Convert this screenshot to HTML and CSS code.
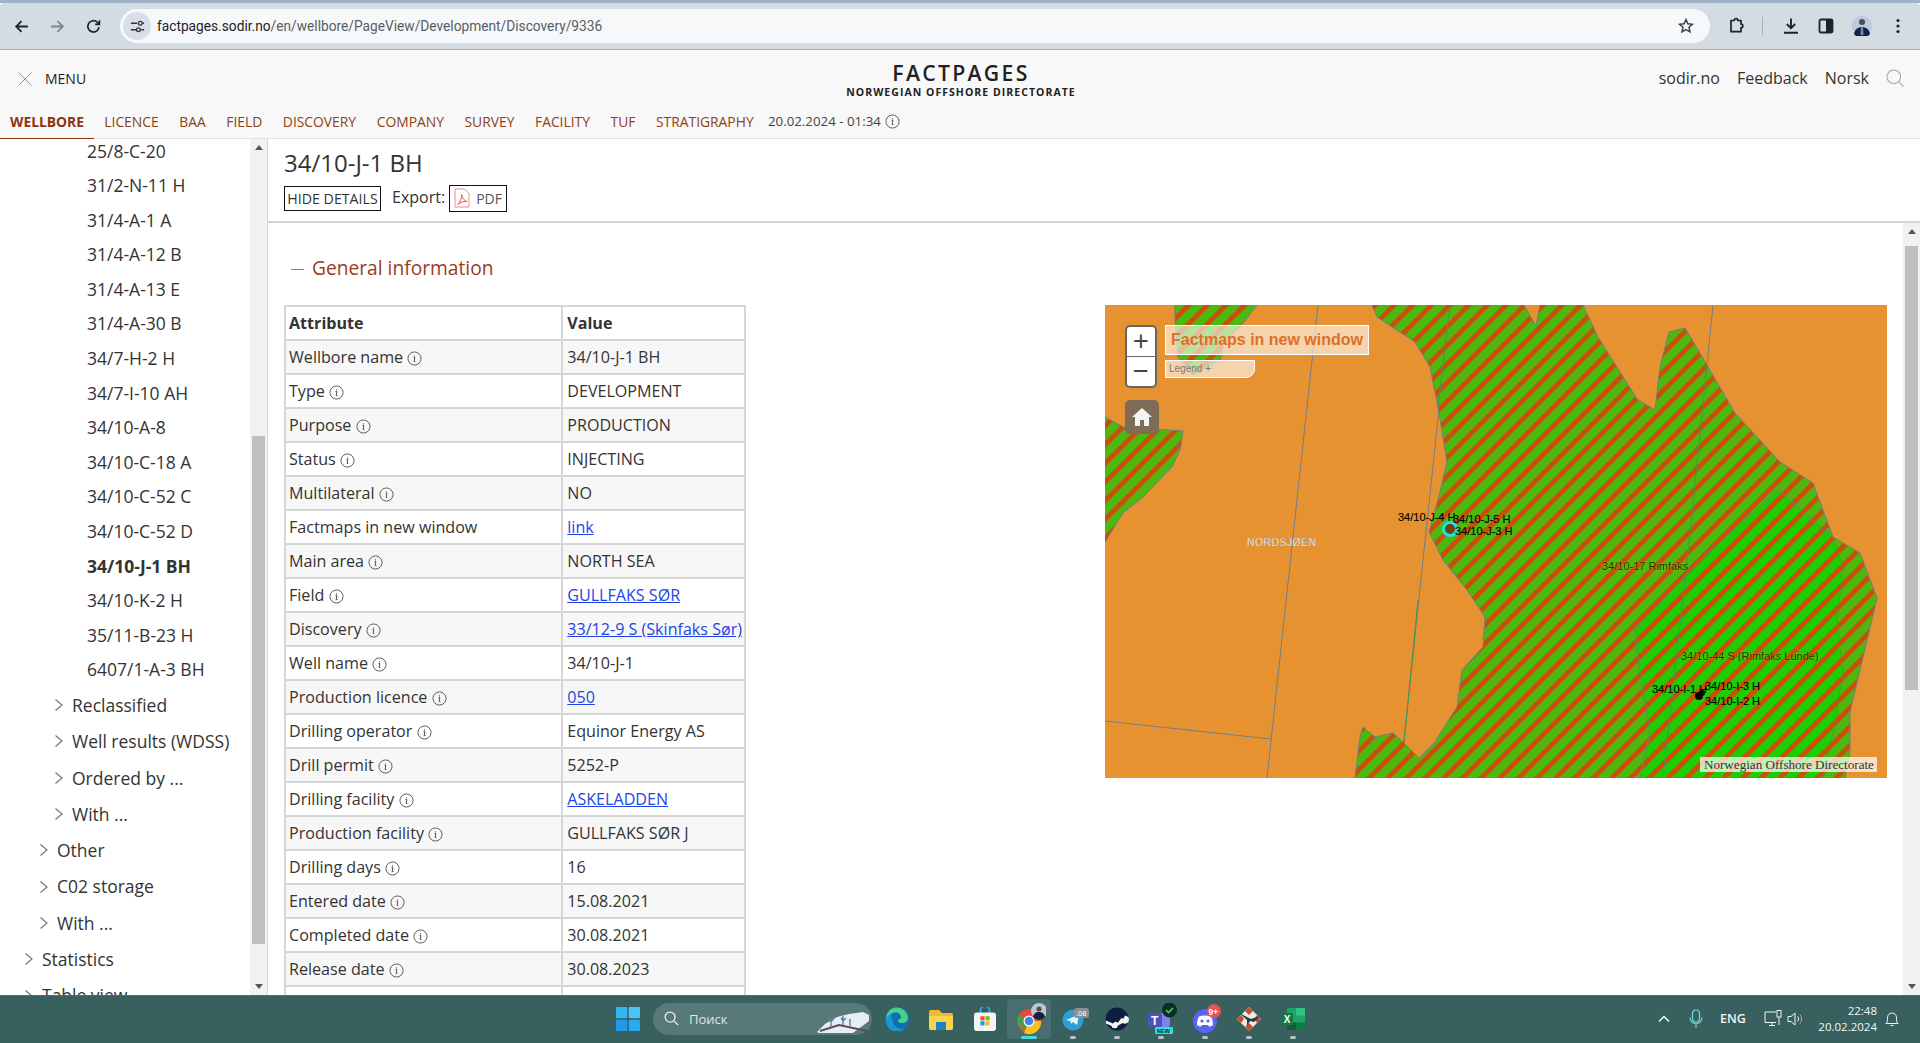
FILE: index.html
```html
<!DOCTYPE html>
<html lang="en">
<head>
<meta charset="utf-8">
<title>FactPages</title>
<link rel="stylesheet" href="styles.css">
</head>
<body>
<svg class="defs" width="0" height="0" aria-hidden="true">
  <defs>
    <symbol id="info" viewBox="0 0 16 16">
      <circle cx="8" cy="8" r="7" fill="none" stroke="#555" stroke-width="1"/>
      <path d="M7 7h1.400L7.600 11.200h1.300M8 4.600v1.200" fill="none" stroke="#444" stroke-width="1"/>
    </symbol>
    <symbol id="chev" viewBox="0 0 10 14">
      <path d="M1.500 1.500 8 7l-6.500 5.500" fill="none" stroke="#777" stroke-width="1.200"/>
    </symbol>
    <pattern id="stripes" width="13.200" height="13.200" patternUnits="userSpaceOnUse" patternTransform="rotate(45) translate(4 0)">
      <rect width="5" height="13.200" fill="#c8500a"/>
    </pattern>
  </defs>
</svg>

<div class="tabstrip"></div>
<div class="toolbar">
  <svg class="tb-icon" viewBox="0 0 16 16"><path d="M14 8H3M8 3 3 8l5 5" fill="none" stroke="#1f2328" stroke-width="1.700"/></svg>
  <svg class="tb-icon" viewBox="0 0 16 16"><path d="M2 8h11M8 3l5 5-5 5" fill="none" stroke="#7e868e" stroke-width="1.700"/></svg>
  <svg class="tb-icon" viewBox="0 0 16 16"><path d="M13.200 8.600A5.300 5.300 0 1 1 11.600 4L13.500 5.800M13.600 2v4h-4" fill="none" stroke="#1f2328" stroke-width="1.600"/></svg>
  <div class="omnibox">
    <span class="site-btn">
      <svg viewBox="0 0 16 16" width="15" height="15"><path d="M1 4.500h6.500M12 11.500h3M1 11.500h5.500" stroke="#333" stroke-width="1.500" fill="none"/><circle cx="11" cy="4.500" r="2" fill="none" stroke="#333" stroke-width="1.400"/><circle cx="9" cy="11.500" r="2" fill="none" stroke="#333" stroke-width="1.400"/><path d="M13 4.500h2" stroke="#333" stroke-width="1.500"/></svg>
    </span>
    <span class="url"><span class="url-host">factpages.sodir.no</span>/en/wellbore/PageView/Development/Discovery/9336</span>
    <svg class="star" viewBox="0 0 16 16"><path d="m8 1.600 1.900 4.200 4.500.5-3.400 3 1 4.500L8 11.500l-4 2.300 1-4.500-3.400-3 4.500-.5z" fill="none" stroke="#3c4043" stroke-width="1.500"/></svg>
  </div>
  <div class="tb-right">
    <svg class="tb-icon-r" viewBox="0 0 18 18"><path d="M4 3.500h3.200a1.800 1.800 0 0 1 3.600 0H14v3.600a1.800 1.800 0 0 1 0 3.600v4H4z" fill="none" stroke="#1f2328" stroke-width="1.700" stroke-linejoin="round"/></svg>
    <span class="tb-sep"></span>
    <svg class="tb-icon-r dl" viewBox="0 0 18 18"><path d="M9 1.500v9.500M4.800 7 9 11.200 13.200 7M2 15.700h14" fill="none" stroke="#1f2328" stroke-width="1.900"/></svg>
    <svg class="tb-icon-r panel" viewBox="0 0 18 18"><rect x="2.500" y="2.500" width="13" height="13" rx="1.500" fill="none" stroke="#1f2328" stroke-width="1.800"/><rect x="9" y="2.500" width="6.500" height="13" fill="#1f2328"/></svg>
    <svg class="tb-icon-r avatar" viewBox="0 0 20 20"><circle cx="10" cy="10" r="10" fill="#b9cbe0"/><circle cx="10" cy="6" r="3" fill="#5a4a42"/><path d="M2 18c1-5 4-7 8-7s7 2 8 7a10 10 0 0 1-16 0z" fill="#16233f"/><path d="M9 11h2l.5 8h-3z" fill="#6f86c8"/></svg>
    <svg class="tb-icon-r dots" viewBox="0 0 18 18"><circle cx="9" cy="3.500" r="1.600" fill="#1f2328"/><circle cx="9" cy="9" r="1.600" fill="#1f2328"/><circle cx="9" cy="14.500" r="1.600" fill="#1f2328"/></svg>
  </div>
</div>

<header class="site-header">
  <div class="header-top">
    <div class="menu">
      <svg viewBox="0 0 14 14" width="14" height="14"><path d="M.5.5l13 13M13.500.5l-13 13" stroke="#999" stroke-width="1"/></svg>
      <span>MENU</span>
    </div>
    <div class="brand">
      <div class="brand-title">FACTPAGES</div>
      <div class="brand-sub">NORWEGIAN OFFSHORE DIRECTORATE</div>
    </div>
    <div class="util">
      <span>sodir.no</span><span>Feedback</span><span>Norsk</span>
      <svg viewBox="0 0 18 18" width="18" height="18"><circle cx="7.800" cy="7.800" r="6.800" fill="none" stroke="#aaa" stroke-width="1.100"/><path d="m12.800 12.800 4.500 4.700" stroke="#aaa" stroke-width="1.100"/></svg>
    </div>
  </div>
  <nav class="nav">
    <a class="nav-item active">WELLBORE</a>
    <a class="nav-item">LICENCE</a>
    <a class="nav-item">BAA</a>
    <a class="nav-item">FIELD</a>
    <a class="nav-item">DISCOVERY</a>
    <a class="nav-item">COMPANY</a>
    <a class="nav-item">SURVEY</a>
    <a class="nav-item">FACILITY</a>
    <a class="nav-item">TUF</a>
    <a class="nav-item">STRATIGRAPHY</a>
    <span class="nav-date">20.02.2024 - 01:34 <svg class="info"><use href="#info"/></svg></span>
  </nav>
</header>

<div class="main">
  <aside class="sidebar">
    <ul class="tree">
      <li class="leaf">25/8-C-20</li>
      <li class="leaf">31/2-N-11 H</li>
      <li class="leaf">31/4-A-1 A</li>
      <li class="leaf">31/4-A-12 B</li>
      <li class="leaf">31/4-A-13 E</li>
      <li class="leaf">31/4-A-30 B</li>
      <li class="leaf">34/7-H-2 H</li>
      <li class="leaf">34/7-I-10 AH</li>
      <li class="leaf">34/10-A-8</li>
      <li class="leaf">34/10-C-18 A</li>
      <li class="leaf">34/10-C-52 C</li>
      <li class="leaf">34/10-C-52 D</li>
      <li class="leaf current">34/10-J-1 BH</li>
      <li class="leaf">34/10-K-2 H</li>
      <li class="leaf">35/11-B-23 H</li>
      <li class="leaf">6407/1-A-3 BH</li>
      <li class="node lvl3"><svg class="chev"><use href="#chev"/></svg>Reclassified</li>
      <li class="node lvl3"><svg class="chev"><use href="#chev"/></svg>Well results (WDSS)</li>
      <li class="node lvl3"><svg class="chev"><use href="#chev"/></svg>Ordered by ...</li>
      <li class="node lvl3"><svg class="chev"><use href="#chev"/></svg>With ...</li>
      <li class="node lvl2"><svg class="chev"><use href="#chev"/></svg>Other</li>
      <li class="node lvl2"><svg class="chev"><use href="#chev"/></svg>C02 storage</li>
      <li class="node lvl2"><svg class="chev"><use href="#chev"/></svg>With ...</li>
      <li class="node lvl1"><svg class="chev"><use href="#chev"/></svg>Statistics</li>
      <li class="node lvl1"><svg class="chev"><use href="#chev"/></svg>Table view</li>
    </ul>
    <div class="scrollbar side-scroll"><i class="arrow up"></i><i class="thumb"></i><i class="arrow down"></i></div>
  </aside>

  <section class="content">
    <div class="title-block">
      <h1>34/10-J-1 BH</h1>
      <div class="actions">
        <button class="btn">HIDE DETAILS</button>
        <span class="export">Export:</span>
        <span class="btn-pdf">
          <svg viewBox="0 0 16 20" width="16" height="20"><path d="M1 1h9.500L15 5.500V19H1z" fill="#fff" stroke="#f08a8a" stroke-width="1"/><path d="M3.500 16.500C6 15 8 10 7.600 6.500c.8 4 3 6.500 5.500 7-3-.3-6.600.6-9.600 3z" fill="none" stroke="#e8534f" stroke-width="1"/></svg>
          PDF
        </span>
      </div>
    </div>
    <div class="scroll-pane">
      <div class="pane-body">
        <h2 class="section"><span class="dash"></span>General information</h2>
        <div class="columns">
          <table class="facts">
            <tr class="head"><th>Attribute</th><th>Value</th></tr>
            <tr><td>Wellbore name <svg class="info"><use href="#info"/></svg></td><td>34/10-J-1 BH</td></tr>
            <tr><td>Type <svg class="info"><use href="#info"/></svg></td><td>DEVELOPMENT</td></tr>
            <tr><td>Purpose <svg class="info"><use href="#info"/></svg></td><td>PRODUCTION</td></tr>
            <tr><td>Status <svg class="info"><use href="#info"/></svg></td><td>INJECTING</td></tr>
            <tr><td>Multilateral <svg class="info"><use href="#info"/></svg></td><td>NO</td></tr>
            <tr><td>Factmaps in new window</td><td><a>link</a></td></tr>
            <tr><td>Main area <svg class="info"><use href="#info"/></svg></td><td>NORTH SEA</td></tr>
            <tr><td>Field <svg class="info"><use href="#info"/></svg></td><td><a>GULLFAKS SØR</a></td></tr>
            <tr><td>Discovery <svg class="info"><use href="#info"/></svg></td><td><a>33/12-9 S (Skinfaks Sør)</a></td></tr>
            <tr><td>Well name <svg class="info"><use href="#info"/></svg></td><td>34/10-J-1</td></tr>
            <tr><td>Production licence <svg class="info"><use href="#info"/></svg></td><td><a>050</a></td></tr>
            <tr><td>Drilling operator <svg class="info"><use href="#info"/></svg></td><td>Equinor Energy AS</td></tr>
            <tr><td>Drill permit <svg class="info"><use href="#info"/></svg></td><td>5252-P</td></tr>
            <tr><td>Drilling facility <svg class="info"><use href="#info"/></svg></td><td><a>ASKELADDEN</a></td></tr>
            <tr><td>Production facility <svg class="info"><use href="#info"/></svg></td><td>GULLFAKS SØR J</td></tr>
            <tr><td>Drilling days <svg class="info"><use href="#info"/></svg></td><td>16</td></tr>
            <tr><td>Entered date <svg class="info"><use href="#info"/></svg></td><td>15.08.2021</td></tr>
            <tr><td>Completed date <svg class="info"><use href="#info"/></svg></td><td>30.08.2021</td></tr>
            <tr><td>Release date <svg class="info"><use href="#info"/></svg></td><td>30.08.2023</td></tr>
            <tr><td>&nbsp;</td><td>&nbsp;</td></tr>
          </table>

          <div class="map">
            <svg class="map-svg" viewBox="0 0 782 473" width="782" height="473">
              <rect width="782" height="473" fill="#e79230"/>
              <g stroke="#6f7f86" stroke-width="1" fill="none">
                <path d="M213 0 162 473"/>
                <path d="M345 0 295 473"/>
                <path d="M0 416 166 434"/>
                <path d="M608 0 602 60"/>
              </g>
              <g>
                <path fill="#4cb90f" d="M267 0 272 12 310 37 325 62 333 102 342 157 333 195 324 227 338 255 362 285 380 312 378 342 357 365 352 402 329 438 314 453 299 438 288 428 270 432 258 422 255 432 250 473H740L745 448 745 407 772 293 755 248 728 232 708 178 675 157 630 108 602 60 580 23 564 27 555 62 550 105 532 94 493 32 478 0H435L431 21 419 0Z"/>
                <path fill="#1ccf03" d="M673 185 728 233 738 262 732 315 738 368 728 428 718 473H535L545 428 535 368 530 325 595 255Z"/>
                <path fill="#4cb90f" d="M0 112 18 122 78 126 75 145 67 162 38 192 18 208 0 237Z"/>
                <path fill="#4cb90f" d="M70 0H152L135 22 120 35 115 55 88 70 73 52 70 15Z"/>
              </g>
              <g fill="url(#stripes)">
                <path d="M267 0 272 12 310 37 325 62 333 102 342 157 333 195 324 227 338 255 362 285 380 312 378 342 357 365 352 402 329 438 314 453 299 438 288 428 270 432 258 422 255 432 250 473H740L745 448 745 407 772 293 755 248 728 232 708 178 675 157 630 108 602 60 580 23 564 27 555 62 550 105 532 94 493 32 478 0H435L431 21 419 0Z"/>
                <path d="M0 112 18 122 78 126 75 145 67 162 38 192 18 208 0 237Z"/>
                <path d="M70 0H152L135 22 120 35 115 55 88 70 73 52 70 15Z"/>
              </g>
              <g fill="none" stroke="#6f7f86" stroke-width="1">
                <path d="M267 0 272 12 310 37 325 62 333 102 342 157 333 195 324 227 338 255 362 285 380 312 378 342 357 365 352 402 329 438 314 453 299 438 288 428 270 432 258 422 255 432 250 473M740 473 745 448 745 407 772 293 755 248 728 232 708 178 675 157 630 108 602 60 580 23 564 27 555 62 550 105 532 94 493 32 478 0M435 0 431 21 419 0"/>
                <path d="M0 112 18 122 78 126 75 145 67 162 38 192 18 208 0 237"/>
                <path d="M152 0 135 22 120 35 115 55 88 70 73 52 70 15 70 0"/>
                <path d="M673 185 728 233 M595 255 673 185 M595 255 530 325 535 368 545 428 535 473" stroke="#5f8a70"/>
                <path d="M602 60 583 248 558 473M345 0 333 102M313 295 299 438" stroke="#3c9a50"/>
                <path d="M728 233 738 262 732 315 738 368 728 428 718 473" stroke="#3c9a30" stroke-opacity=".6"/>
              </g>
              <circle cx="345" cy="224" r="6.500" fill="#7a3d10" stroke="#16e5e8" stroke-width="3"/>
              <circle cx="594" cy="391" r="4" fill="#000"/><circle cx="597" cy="388" r="3" fill="#000"/>
              <g class="map-labels">
                <text x="293" y="216">34/10-J-4 H</text>
                <text x="348" y="218">34/10-J-5 H</text>
                <text x="350" y="230">34/10-J-3 H</text>
                <text x="547" y="388">34/10-I-1 H</text>
                <text x="600" y="385">34/10-I-3 H</text>
                <text x="600" y="400">34/10-I-2 H</text>
              </g>
              <g class="map-names">
                <text x="497" y="265">34/10-17 Rimfaks</text>
                <text x="576" y="355">34/10-44 S (Rimfaks Lunde)</text>
              </g>
              <text class="map-sea" x="142" y="241">NORDSJØEN</text>
            </svg>
            <div class="zoom-ctl"><span>+</span><span>−</span></div>
            <div class="home-btn">
              <svg viewBox="0 0 20 18" width="20" height="18"><path d="M10 0 0 9h3v9h5v-6h4v6h5V9h3z" fill="#f5f5f5"/></svg>
            </div>
            <div class="map-link">Factmaps in new window</div>
            <div class="map-legend">Legend +</div>
            <div class="map-attr">Norwegian Offshore Directorate</div>
          </div>
        </div>
      </div>
      <div class="scrollbar pane-scroll"><i class="arrow up"></i><i class="thumb"></i><i class="arrow down"></i></div>
    </div>
  </section>
</div>

<footer class="taskbar">
  <div class="task-cell start">
    <svg viewBox="0 0 24 24" width="24" height="24"><g fill="#35b5f2"><rect width="11.300" height="11.300" x="0" y="0" rx="1"/><rect width="11.300" height="11.300" x="12.700" y="0" rx="1" fill="#4cc4f5"/><rect width="11.300" height="11.300" x="0" y="12.700" rx="1" fill="#1e9ce8"/><rect width="11.300" height="11.300" x="12.700" y="12.700" rx="1" fill="#2aaaf0"/></g></svg>
  </div>
  <div class="search">
    <svg viewBox="0 0 16 16" width="15" height="15"><circle cx="6.500" cy="6.500" r="5.300" fill="none" stroke="#e8eeee" stroke-width="1.400"/><path d="m10.500 10.500 4.500 4.500" stroke="#e8eeee" stroke-width="1.400"/></svg>
    <span>Поиск</span>
    <svg class="search-art" viewBox="0 0 52 22" width="52" height="22"><path d="M0 21 8 13 20 6 32 3 46 1 52 4V10L36 22H2z" fill="#e6eef5"/><path d="M3 20 22 14 50 20" stroke="#5d4a5f" stroke-width="2" fill="none"/><path d="M14 16V7M12 8l2 3 3-4M26 14V5M24 7l2 3 3-3M33 15V8" stroke="#5e7ca6" stroke-width="1.400" fill="none"/></svg>
  </div>
  <div class="task-icons">
    <div class="task-cell">
      <svg viewBox="0 0 24 24" width="24" height="24"><circle cx="12" cy="12" r="12" fill="#0f6fb5"/><path d="M1 12a11 11 0 0 1 22-1c0 4-3.500 5.500-7 5-3-.5-3-2.500-3-3.500 1.500 0 3-.5 3-2.500 0-3-3-5-6-4.500C5.500 6 3 9 1 12z" fill="#45d08c"/><path d="M8 14c0 5 5 9.500 12 7a11 11 0 0 1-19-9c1-3 4-5.500 6-5-1.500 2-.5 3.500 1 7z" fill="#1bb3e8" fill-opacity=".6"/></svg>
    </div>
    <div class="task-cell">
      <svg viewBox="0 0 26 22" width="26" height="22"><path d="M1 4a2 2 0 0 1 2-2h8l3 3h9a2 2 0 0 1 2 2v13a2 2 0 0 1-2 2H3a2 2 0 0 1-2-2z" fill="#f1b92d"/><path d="M1 8h24v12a2 2 0 0 1-2 2H3a2 2 0 0 1-2-2z" fill="#fcd34d"/><rect x="8" y="14" width="10" height="8" fill="#1a83c8"/></svg>
    </div>
    <div class="task-cell">
      <svg viewBox="0 0 24 26" width="22" height="24"><path d="M7 7V4a5 5 0 0 1 10 0v3" fill="none" stroke="#35b5f2" stroke-width="1.800"/><rect y="6" width="24" height="20" rx="3" fill="#f2f4f6"/><rect x="7" y="10" width="4.500" height="4.500" fill="#f25022"/><rect x="12.500" y="10" width="4.500" height="4.500" fill="#7fba00"/><rect x="7" y="15.500" width="4.500" height="4.500" fill="#00a4ef"/><rect x="12.500" y="15.500" width="4.500" height="4.500" fill="#ffb900"/></svg>
    </div>
    <div class="task-cell is-active">
      <svg viewBox="-3 0 34 34" width="34" height="34"><circle cx="14" cy="19" r="12" fill="#e04a3c"/><path d="M3.600 13 9 25a12 12 0 0 0 15.500.5L14 19z" fill="#37a853"/><path d="M14 19 9 31a12 12 0 0 0 17-12z" fill="#f7c21a"/><path d="M3.600 13 9 29a12 12 0 0 1-5.400-16z" fill="#37a853"/><circle cx="14" cy="19" r="5.500" fill="#fff"/><circle cx="14" cy="19" r="4.300" fill="#3f82ec"/><circle cx="24" cy="9" r="8" fill="#b8c6d6"/><circle cx="24" cy="7" r="2.500" fill="#5a4a42"/><path d="M18 15c1-4 3-5 6-5s5 1 6 5a8 8 0 0 1-12 0z" fill="#16233f"/></svg>
      <i class="run run-active"></i>
    </div>
    <div class="task-cell">
      <svg viewBox="-5 0 34 26" width="34" height="26"><circle cx="12" cy="14" r="10.500" fill="#2c9fd8"/><path d="M5 14 18 8.500 16 19l-4-3-2 2-.5-3z" fill="#eaf6fc"/><rect x="13" y="2" width="15" height="10" rx="2.500" fill="#8a8f92"/><text class="badge-txt" x="15" y="10">.08</text></svg>
      <i class="run"></i>
    </div>
    <div class="task-cell">
      <svg viewBox="0 0 24 24" width="24" height="24"><circle cx="12" cy="12" r="11.500" fill="#0e1e40"/><path d="M.8 13.500 8 16.500a3.500 3.500 0 0 1 5-.8l3.500-5a4 4 0 1 1 1.300 5.300L13 18.500a3.500 3.500 0 0 1-6.800.3L1 16.500z" fill="#f2f4f6"/><circle cx="17.500" cy="9.500" r="2" fill="#0e1e40"/></svg>
      <i class="run"></i>
    </div>
    <div class="task-cell">
      <svg viewBox="0 0 32 32" width="32" height="32"><rect x="11" y="10" width="14" height="14" rx="2" fill="#7b83eb"/><rect x="3" y="10" width="14" height="14" rx="1.500" fill="#4b53bc"/><text class="teams-t" x="6" y="22">T</text><rect x="10" y="24" width="18" height="7" rx="1" fill="#2ee0d9"/><text class="new-txt" x="12" y="30">NEW</text><circle cx="24.500" cy="7" r="7.500" fill="#0f2b22"/><path d="m21 7 2.500 2.500 4.500-4.500" stroke="#3fd07a" stroke-width="1.600" fill="none"/></svg>
      <i class="run"></i>
    </div>
    <div class="task-cell">
      <svg viewBox="-2 0 32 30" width="32" height="30"><circle cx="14" cy="17" r="12" fill="#5865f2"/><path d="M8 12.500c3.500-1.500 8.500-1.500 12 0 1.500 2.500 2 6 2 8.500-1.500 1-3 1.500-4 1.500l-1-1.500h-6L10 22.500c-1 0-2.500-.5-4-1.500 0-2.500.5-6 2-8.500z" fill="#fff"/><circle cx="11" cy="17" r="1.600" fill="#5865f2"/><circle cx="17" cy="17" r="1.600" fill="#5865f2"/><circle cx="23" cy="7" r="7" fill="#e9505a"/><text class="badge-red" x="17.500" y="10.500">9+</text></svg>
      <i class="run"></i>
    </div>
    <div class="task-cell">
      <svg viewBox="0 0 24 24" width="24" height="24"><path d="M12 0 24 12 12 24 0 12z" fill="#efe9df"/><path d="M12 0 16 4 12 8 8 4zM20 8l4 4-4 4-3-4zM12 24l-4-4 4-4 4 4zM4 8l3 4-3 4-4-4z" fill="#c84d32"/><path d="M2 6 14 12l9-3-6 6-4-1-3 5 0-6z" fill="#1d3f50"/></svg>
      <i class="run"></i>
    </div>
    <div class="task-cell">
      <svg viewBox="0 0 24 22" width="24" height="22"><rect x="6" width="18" height="22" rx="1.500" fill="#21a366"/><rect x="15" width="9" height="7.500" fill="#33c481"/><rect x="15" y="14.500" width="9" height="7.500" fill="#107c41"/><rect x="6" y="14.500" width="9" height="7.500" fill="#185c37"/><rect y="5" width="12" height="12" rx="1" fill="#107c41"/><text class="xl-txt" x="2.800" y="14.500">X</text></svg>
      <i class="run"></i>
    </div>
  </div>
  <div class="tray">
    <svg class="tray-chev" viewBox="0 0 12 8" width="12" height="8"><path d="M1 6.500 6 1.500l5 5" stroke="#f2f6f6" stroke-width="1.500" fill="none"/></svg>
    <svg class="tray-mic" viewBox="0 0 14 20" width="14" height="20"><rect x="3.500" y="1" width="7" height="12" rx="3.500" fill="none" stroke="#6fd8d4" stroke-width="1.200"/><path d="M1 8.500a6 6 0 0 0 12 0M7 15v4" stroke="#6fd8d4" stroke-width="1.200" fill="none"/></svg>
    <span class="tray-lang">ENG</span>
    <svg class="tray-net" viewBox="0 0 18 18" width="18" height="18"><path d="M12 2H1v10.500h11M5 15.500h6M8 12.500v3" fill="none" stroke="#f0f4f4" stroke-width="1"/><rect x="13" y=".5" width="4" height="6.500" fill="none" stroke="#f0f4f4" stroke-width="1"/><path d="M15 7v8" stroke="#f0f4f4"/></svg>
    <svg class="tray-vol" viewBox="0 0 18 14" width="18" height="14"><path d="M1 4.500h3L8 1v12L4 9.500H1z" fill="none" stroke="#f0f4f4" stroke-width="1"/><path d="M10.500 4.500a3.500 3.500 0 0 1 0 5" fill="none" stroke="#f0f4f4"/><path d="M13 2.500a7 7 0 0 1 0 9" fill="none" stroke="#9db0b0"/></svg>
    <div class="clock"><span>22:48</span><span>20.02.2024</span></div>
    <svg class="tray-bell" viewBox="0 0 14 16" width="14" height="16"><path d="M1 12.500c1.500-1.500 1.500-3 1.500-6a4.500 4.500 0 0 1 9 0c0 3 0 4.500 1.500 6zM5.500 14.500h3" fill="none" stroke="#f0f4f4" stroke-width="1"/></svg>
  </div>
</footer>
</body>
</html>
```
FILE: styles.css
```css
* { box-sizing: border-box; }
html, body { margin: 0; height: 100%; }
body {
  width: 1920px; height: 1043px; overflow: hidden;
  display: flex; flex-direction: column;
  font-family: "Open Sans", sans-serif; color: #333; background: #fff;
}
.defs { position: absolute; }

/* browser chrome */
.tabstrip { height: 3px; background: #9db2c5; flex: none; }
.toolbar {
  height: 47px; flex: none; background: #d3dbe3; border-bottom: 1px solid #a9b3bd;
  display: flex; align-items: center; padding: 0 0 0 13px; border-radius: 4px 4px 0 0;
}
.tb-icon { width: 17px; height: 17px; margin-right: 19px; flex: none; }
.omnibox {
  width: 1590px; height: 34px; margin-left: -1px; flex: none;
  background: #f6f8fa; border-radius: 17px; display: flex; align-items: center; padding-left: 2px;
}
.site-btn { width: 28px; height: 28px; border-radius: 50%; background: #d8dfe6; display: flex; align-items: center; justify-content: center; margin-right: 6px; margin-left: 1px; }
.url { font: 13.730px "Roboto", sans-serif; color: #5a5e63; white-space: nowrap; }
.url-host { color: #1f2328; }
.star { width: 16px; height: 16px; margin-left: auto; margin-right: 16px; }
.tb-right { display: flex; align-items: center; flex: none; margin-left: 17px; width: 190px; height: 24px; }
.tb-icon-r { width: 18px; height: 18px; flex: none; }
.tb-sep { width: 1px; height: 18px; background: #9fb0c0; margin: 0 0 0 17px; }
.dl { margin-left: 19px; }
.panel { margin-left: 17px; }
.avatar { width: 20px; height: 20px; margin-left: 17px; }
.dots { margin-left: 17px; }

/* site header */
.site-header { flex: none; height: 89px; background: #f8f8f8; border-bottom: 1px solid #e2e2e2; display: flex; flex-direction: column; }
.header-top { height: 57px; display: grid; grid-template-columns: 1fr auto 1fr; align-items: center; padding: 0 16px 0 18px; }
.menu { display: flex; align-items: center; gap: 13px; font-size: 14px; color: #222; }
.brand { text-align: center; padding-top: 2px; }
.brand-title { font-weight: 600; font-size: 21.200px; letter-spacing: 2.300px; line-height: 26px; color: #222; }
.brand-sub { font-weight: 700; font-size: 10.500px; letter-spacing: 1.040px; line-height: 13px; color: #222; }
.util { justify-self: end; display: flex; align-items: center; gap: 17px; font-size: 16px; color: #333; margin-top: -2px; }
.nav { height: 25px; margin-top: 5.500px; display: flex; align-items: flex-start; font-size: 13.850px; line-height: 17px; }
.nav-item { padding: 0 10.300px; height: 26px; color: #8c4216; white-space: nowrap; display: block; }
.nav-item.active { font-weight: 700; border-bottom: 1px solid #8c3411; color: #8c3411; padding-left: 10px; padding-right: 10px; }
.nav-date { margin-left: 4px; font-size: 13.300px; color: #444; display: flex; align-items: center; gap: 4px; height: 17px; }
.info { width: 15px; height: 15px; vertical-align: -3px; }

/* main */
.main { flex: 1; min-height: 0; display: flex; }
.sidebar { width: 268px; flex: none; display: flex; overflow: hidden; border-right: 1px solid #d8d8d8; }
.tree { list-style: none; margin: -5.500px 0 0; padding: 0; width: 250px; flex: none; font-size: 17.500px; color: #333; }
.leaf { height: 34.600px; line-height: 34.600px; padding-left: 87px; white-space: nowrap; }
.current { font-weight: 700; }
.node { height: 36.300px; line-height: 36.300px; white-space: nowrap; display: flex; align-items: center; }
.chev { width: 10px; height: 14px; flex: none; margin-right: 8px; }
.lvl3 { padding-left: 54px; }
.lvl2 { padding-left: 39px; }
.lvl1 { padding-left: 24px; }

.scrollbar { width: 17px; flex: none; background: #f1f1f1; display: flex; flex-direction: column; align-items: center; }
.scrollbar .arrow { display: block; width: 0; height: 0; flex: none; border: 4px solid transparent; }
.arrow.up { border-bottom: 5px solid #555 !important; border-top-width: 0 !important; margin-top: 6px; }
.arrow.down { border-top: 5px solid #555 !important; border-bottom-width: 0 !important; margin-top: auto; margin-bottom: 6px; }
.thumb { display: block; width: 13px; background: #bfbfbf; flex: none; }
.side-scroll .thumb { height: 508px; margin-top: 286px; }
.pane-scroll .thumb { height: 444px; margin-top: 12px; }

.content { flex: 1; min-width: 0; display: flex; flex-direction: column; }
.title-block { height: 84px; flex: none; padding: 7px 0 0 16px; border-bottom: 2px solid #d4d4d4; }
h1 { margin: 0; font-size: 24px; font-weight: 400; line-height: 34px; color: #333; }
.actions { display: flex; align-items: center; height: 28px; margin-top: 4px; }
.btn { height: 25px; width: 97px; padding: 0; background: #fff; border: 1px solid #111; font: 14.200px "Open Sans", sans-serif; color: #333; white-space: nowrap; }
.export { margin-left: 11px; font-size: 16px; margin-right: 4px; margin-top: -3px; }
.btn-pdf { height: 27px; width: 58px; border: 1px solid #111; background: #fff; display: flex; align-items: center; gap: 6px; padding-left: 4px; font-size: 14px; color: #555; }

.scroll-pane { flex: 1; min-height: 0; display: flex; }
.pane-body { flex: 1; min-width: 0; overflow: hidden; padding-left: 16px; }
.section { margin: 29px 0 0 7px; height: 32px; line-height: 32px; font-size: 19.200px; font-weight: 400; color: #9a3b22; display: flex; align-items: center; gap: 8px; }
.dash { width: 13px; height: 1px; background: #a0806f; margin-top: 2px; }
.columns { display: flex; align-items: flex-start; margin-top: 21px; }
.facts { border-collapse: collapse; width: 462px; flex: none; font-size: 16.100px; }
.facts th, .facts td { height: 34px; padding: 0 3px; border: 2px solid #d6d6d6; text-align: left; white-space: nowrap; line-height: 20px; }
.facts th:first-child, .facts td:first-child { width: 278px; }
.facts th:last-child, .facts td:last-child { padding-left: 4px; padding-right: 2px; }
.facts tr:nth-child(even) td { background: #f7f7f7; }
.facts a { color: #1f45e6; text-decoration: underline; }
.facts th { font-weight: 700; }

.map { position: relative; width: 782px; height: 473px; margin-left: 359px; flex: none; }
.map-svg { display: block; }
.map-labels text { font: 11px "Liberation Sans", sans-serif; fill: #000; stroke: #000; stroke-width: .12px; }
.map-names text { font: 11px "Liberation Sans", sans-serif; fill: #2a3000; stroke: #b8c800; stroke-width: 1px; stroke-opacity: .45; paint-order: stroke; }
.map-sea { font: 10.500px "Liberation Sans", sans-serif; fill: #fff; stroke: #8a8a7a; stroke-width: .25px; letter-spacing: .4px; }
.zoom-ctl { position: absolute; left: 20px; top: 20px; width: 32px; height: 63px; background: #fff; border: 2px solid #666; border-radius: 5px; display: flex; flex-direction: column; }
.zoom-ctl span { flex: 1; display: flex; align-items: center; justify-content: center; font: 27px/1 "Liberation Sans", sans-serif; color: #444; }
.zoom-ctl span + span { border-top: 1px solid #666; }
.home-btn { position: absolute; left: 20px; top: 95px; width: 34px; height: 34px; background: #7e6b58; border-radius: 5px; display: flex; align-items: center; justify-content: center; }
.map-link { position: absolute; left: 60px; top: 20px; width: 204px; height: 30px; background: rgba(255,255,255,.6); border: 1px solid #fff; font: 700 16px/28px "Liberation Sans", sans-serif; color: #df6f25; padding-left: 5px; white-space: nowrap; }
.map-legend { position: absolute; left: 60px; top: 55px; width: 90px; height: 18px; background: rgba(255,255,255,.6); border: 1px solid #fff; border-bottom-right-radius: 9px; font: 10px/15px "Liberation Sans", sans-serif; color: #7f7a6a; padding-left: 3px; }
.map-attr { position: absolute; left: 595px; top: 452px; width: 177px; height: 15px; background: rgba(255,255,255,.72); font: 13.100px/15px "Liberation Serif", serif; color: #333; padding-left: 4px; white-space: nowrap; }

/* taskbar */
.taskbar { height: 48px; flex: none; background: #37605f; border-top: 1px solid #4d6d6b; display: flex; align-items: center; padding-left: 606px; padding-bottom: 2px; color: #f2f6f6; }
.task-cell { width: 44px; height: 40px; flex: none; display: flex; align-items: center; justify-content: center; position: relative; border-radius: 4px; }
.search { width: 219px; height: 32px; margin-left: 3px; background: rgba(255,255,255,.16); border-radius: 16px; display: flex; align-items: center; padding-left: 11px; gap: 10px; font-size: 13px; color: #dfe8e8; position: relative; flex: none; }
.search-art { position: absolute; right: 3px; bottom: 2px; }
.task-icons { display: flex; margin-left: 3px; flex: none; }
.is-active { background: rgba(255,255,255,.09); }
.run { position: absolute; left: 50%; bottom: 0; width: 6px; height: 3px; margin-left: -3px; border-radius: 2px; background: #b4c4c4; }
.run-active { width: 16px; margin-left: -8px; background: #4fd8d8; }
.badge-txt { font: 7.500px "Liberation Sans", sans-serif; fill: #fff; }
.teams-t { font: 700 12px "Liberation Sans", sans-serif; fill: #fff; }
.new-txt { font: 700 5.500px "Liberation Sans", sans-serif; fill: #0a2a2a; }
.badge-red { font: 700 8.500px "Liberation Sans", sans-serif; fill: #fff; }
.xl-txt { font: 700 10px "Liberation Sans", sans-serif; fill: #fff; }
.tray { margin-left: auto; display: flex; align-items: center; padding-right: 21px; flex: none; }
.tray-mic { margin-left: 19px; }
.tray-lang { margin-left: 17px; font-size: 12.500px; font-weight: 600; color: #f2f6f6; }
.tray-net { margin-left: 18px; }
.tray-vol { margin-left: 5px; }
.clock { margin-left: 13.500px; display: flex; flex-direction: column; align-items: flex-end; font-size: 11.500px; line-height: 16px; }
.tray-bell { margin-left: 8px; }
```
